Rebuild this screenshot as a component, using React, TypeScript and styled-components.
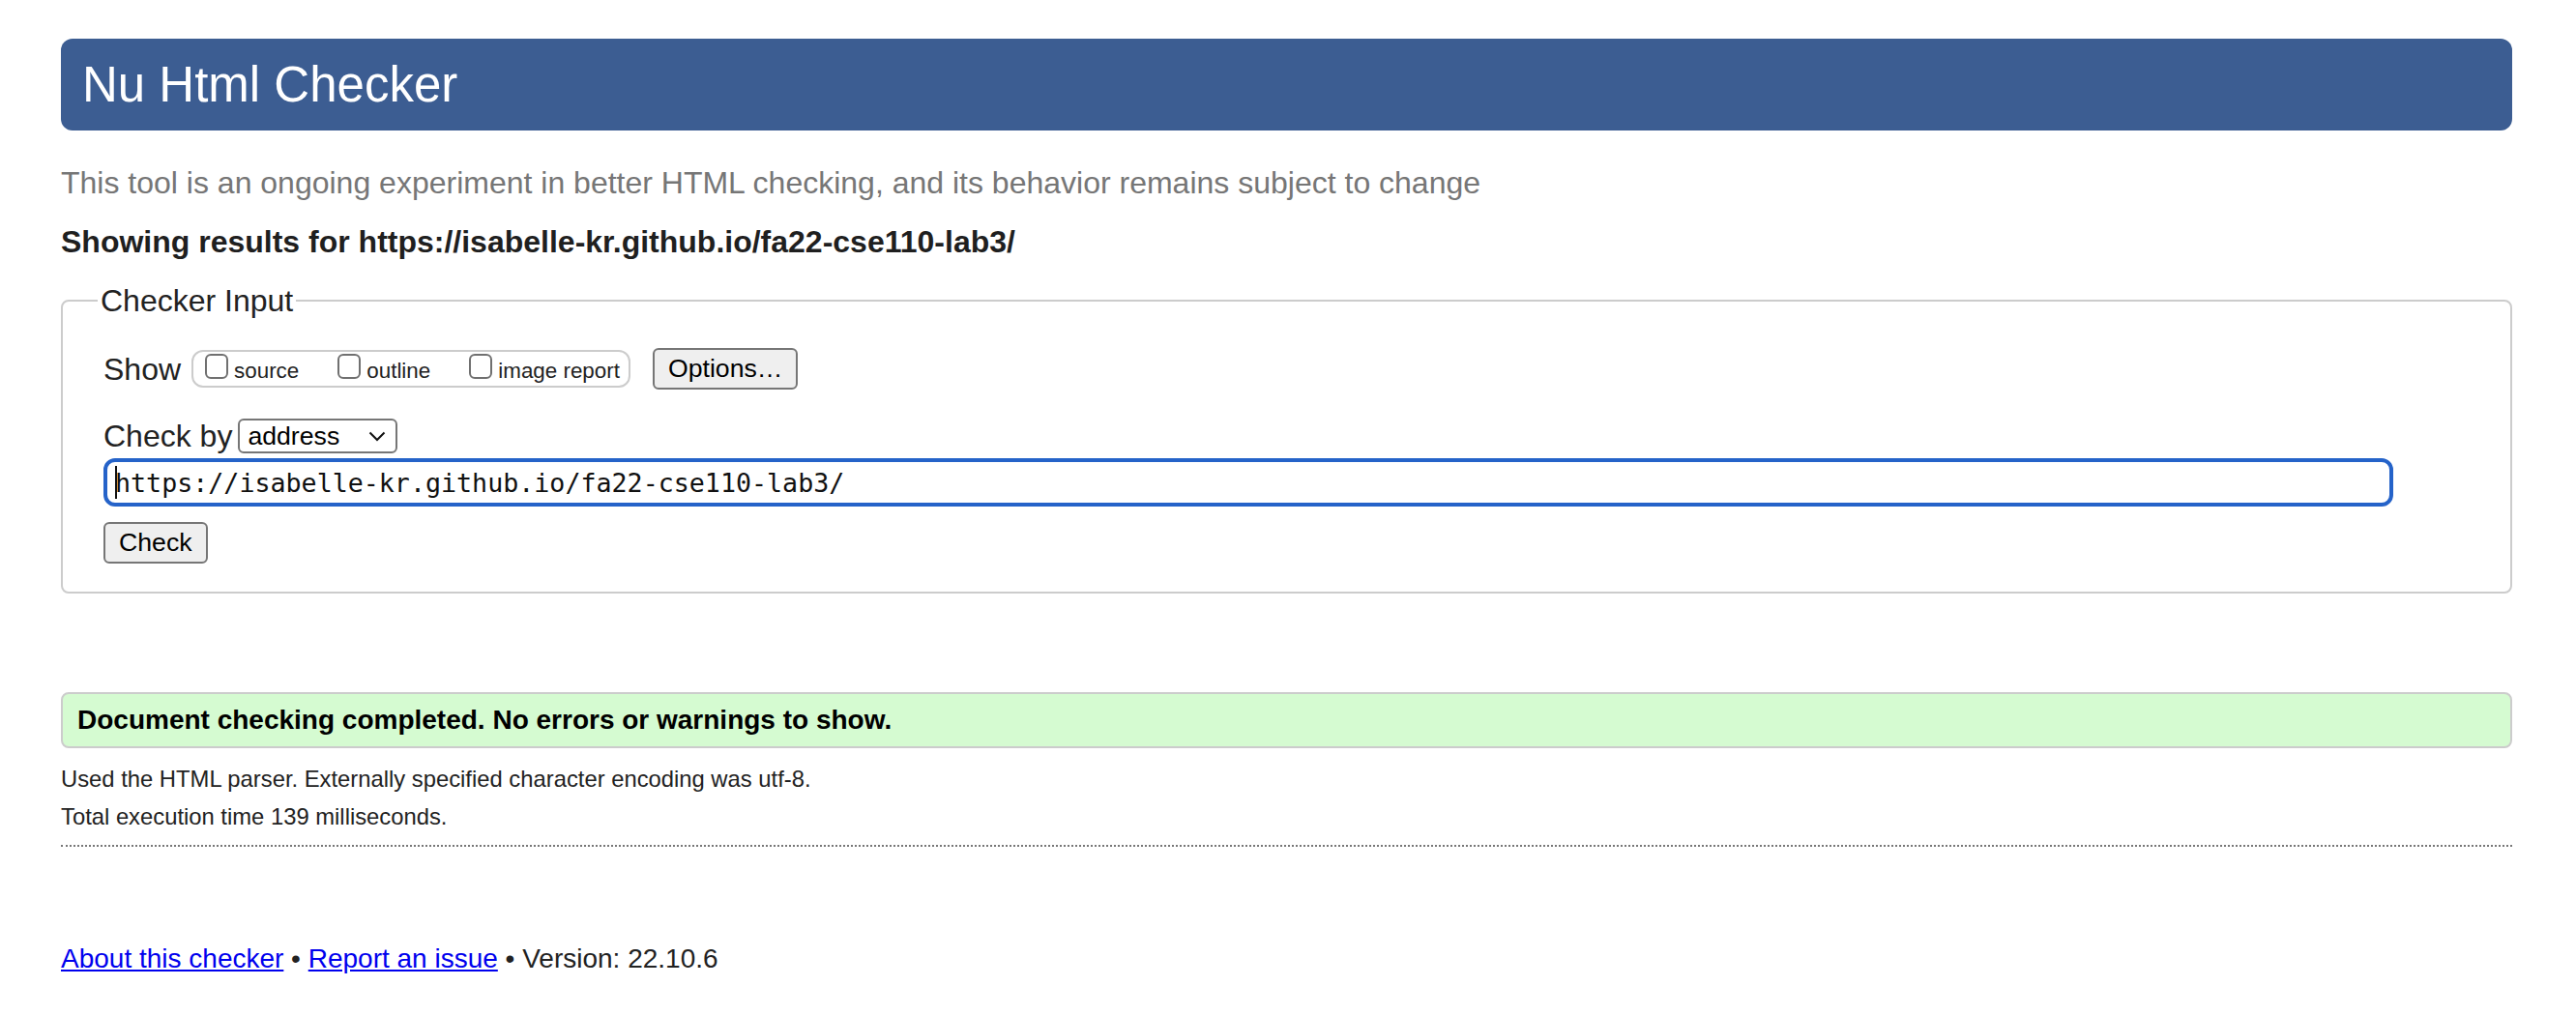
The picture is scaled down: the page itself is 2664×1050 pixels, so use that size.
import React from 'react'
import styled, { createGlobalStyle } from 'styled-components'

const GlobalStyle = createGlobalStyle`
  html, body {
    margin: 0;
    padding: 0;
    background: #fff;
  }
  body {
    font-family: "Liberation Sans", Arial, Helvetica, sans-serif;
    color: #222;
  }
`

const Page = styled.div`
  padding: 40px 66px 40px 63px;
`

const Header = styled.h1`
  margin: 0;
  height: 95px;
  display: flex;
  align-items: center;
  padding-left: 22px;
  background: #3c5d92;
  color: #fff;
  font-size: 51px;
  font-weight: normal;
  border-radius: 12px;
`

const Intro = styled.p`
  margin: 34px 0 0;
  font-size: 32px;
  line-height: 40px;
  color: #767676;
`

const ResultsFor = styled.h2`
  margin: 21px 0 0;
  font-size: 32px;
  line-height: 40px;
  font-weight: bold;
  color: #1f1f1f;
`

const InputSet = styled.fieldset`
  margin: 21px 0 0;
  padding: 29px 42px 29px;
  border: 2px solid #ccc;
  border-radius: 8px;
  min-width: 0;
`

const Legend = styled.legend`
  font-size: 32px;
  line-height: 40px;
  padding: 0 3px;
  margin-left: -6px;
`

const Row = styled.div<{ $mt?: number }>`
  display: flex;
  align-items: center;
  margin-top: ${p => p.$mt ?? 0}px;
`

const FieldLabel = styled.span`
  font-size: 32px;
  line-height: 40px;
`

const CheckGroup = styled.div`
  display: flex;
  align-items: center;
  box-sizing: border-box;
  height: 39px;
  margin-left: 11px;
  padding: 0 9px 0 12px;
  gap: 40px;
  border: 2px solid #ccc;
  border-radius: 12px;
`

const CheckItem = styled.label`
  display: flex;
  align-items: center;
  gap: 6px;
  font-size: 22.4px;
  line-height: 30px;
  padding-top: 4px;
`

const Checkbox = styled.input`
  appearance: none;
  box-sizing: border-box;
  width: 24px;
  height: 26px;
  margin: 0 0 10px;
  border: 2px solid #707070;
  border-radius: 6px;
  background: #fff;
`

const FormButton = styled.button<{ $ml?: number }>`
  box-sizing: border-box;
  height: 43px;
  margin-left: ${p => p.$ml ?? 0}px;
  padding: 0 14px;
  font-family: "Liberation Sans", Arial, sans-serif;
  font-size: 26.67px;
  color: #000;
  background: #efefef;
  border: 2px solid #767676;
  border-radius: 6px;
`

const SelectWrap = styled.div`
  position: relative;
  margin-left: 6px;
  display: flex;
`

const Select = styled.select`
  appearance: none;
  box-sizing: border-box;
  width: 165px;
  height: 36px;
  padding: 0 8px;
  font-family: "Liberation Sans", Arial, sans-serif;
  font-size: 26.67px;
  color: #000;
  background: #fff;
  border: 2px solid #767676;
  border-radius: 6px;
`

const Chevron = styled.svg`
  position: absolute;
  right: 12px;
  top: 13px;
  pointer-events: none;
`

const UrlWrap = styled.div`
  position: relative;
  margin-top: 3px;
  display: flex;
`

const UrlInput = styled.input`
  box-sizing: border-box;
  width: 2368px;
  height: 50px;
  padding: 0 8px;
  font-family: "DejaVu Sans Mono", "Liberation Mono", monospace;
  font-size: 26.67px;
  color: #111;
  border: 4px solid #2563c9;
  border-radius: 12px;
  outline: none;
`

const Caret = styled.span`
  position: absolute;
  left: 12px;
  top: 8px;
  width: 2px;
  height: 34px;
  background: #111;
`

const Status = styled.div`
  box-sizing: border-box;
  height: 58px;
  margin-top: 102px;
  padding-left: 15px;
  display: flex;
  align-items: center;
  font-size: 28px;
  font-weight: bold;
  color: #000;
  background: #d5fbd1;
  border: 2px solid #ccc;
  border-radius: 8px;
`

const Details = styled.div`
  margin-top: 12px;
`

const InfoLine = styled.p`
  margin: 0;
  font-size: 23.8px;
  line-height: 39px;
`

const Rule = styled.hr`
  margin: 10px 0 0;
  border: 0;
  border-top: 2px dotted #777;
`

const Footer = styled.p`
  margin: 96px 0 0;
  font-size: 28px;
  line-height: 40px;
  color: #222;
`

const FooterLink = styled.a`
  color: #0000ee;
  text-decoration: underline;
`

const options = ['source', 'outline', 'image report']

export default function App() {
  return (
    <>
      <GlobalStyle />
      <Page>
        <Header>Nu Html Checker</Header>
        <Intro>
          This tool is an ongoing experiment in better HTML checking, and its behavior remains subject to change
        </Intro>
        <ResultsFor>Showing results for https://isabelle-kr.github.io/fa22-cse110-lab3/</ResultsFor>

        <InputSet>
          <Legend>Checker Input</Legend>
          <Row>
            <FieldLabel>Show</FieldLabel>
            <CheckGroup>
              {options.map(o => (
                <CheckItem key={o}>
                  <Checkbox type="checkbox" />
                  {o}
                </CheckItem>
              ))}
            </CheckGroup>
            <FormButton type="button" $ml={23}>Options…</FormButton>
          </Row>
          <Row $mt={28}>
            <FieldLabel>Check by</FieldLabel>
            <SelectWrap>
              <Select defaultValue="address">
                <option value="address">address</option>
                <option value="upload">file upload</option>
                <option value="textarea">text input</option>
              </Select>
              <Chevron width="18" height="11" viewBox="0 0 18 11">
                <path d="M1.5 1.5 L9 9 L16.5 1.5" fill="none" stroke="#111" strokeWidth="2" />
              </Chevron>
            </SelectWrap>
          </Row>
          <UrlWrap>
            <UrlInput type="url" defaultValue="https://isabelle-kr.github.io/fa22-cse110-lab3/" />
            <Caret />
          </UrlWrap>
          <Row $mt={16}>
            <FormButton type="submit">Check</FormButton>
          </Row>
        </InputSet>

        <Status>Document checking completed. No errors or warnings to show.</Status>
        <Details>
          <InfoLine>Used the HTML parser. Externally specified character encoding was utf-8.</InfoLine>
          <InfoLine>Total execution time 139 milliseconds.</InfoLine>
        </Details>
        <Rule />

        <Footer>
          <FooterLink href="#about">About this checker</FooterLink> • <FooterLink href="#issue">Report an issue</FooterLink> • Version: 22.10.6
        </Footer>
      </Page>
    </>
  )
}
